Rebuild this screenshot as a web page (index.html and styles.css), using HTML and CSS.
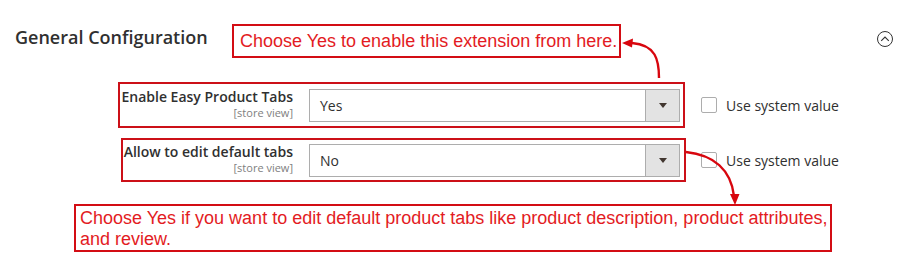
FILE: index.html
```html
<!DOCTYPE html>
<html>
<head>
<meta charset="utf-8">
<link rel="stylesheet" href="styles.css">
</head>
<body>
<div class="page">
  <div class="header">
    <h2 class="title">General Configuration</h2>
    <div class="callout callout-top">Choose Yes to enable this extension from here.</div>
    <svg class="collapse" width="18" height="18" viewBox="0 0 18 18">
      <circle cx="9" cy="9" r="7.5" fill="none" stroke="#333" stroke-width="1"/>
      <polyline points="5.2,10.8 9,7 12.8,10.8" fill="none" stroke="#333" stroke-width="1.1"/>
    </svg>
  </div>

  <div class="rows">
    <div class="row">
      <div class="mark mark-one">
        <div class="label label-one">
          <span class="label-text">Enable Easy Product Tabs</span>
          <span class="scope">[store view]</span>
        </div>
        <div class="select">
          <span class="select-value">Yes</span>
          <span class="select-toggle"><span class="caret"></span></span>
        </div>
      </div>
      <label class="use-system"><span class="checkbox"></span>Use system value</label>
    </div>

    <div class="row row-two">
      <div class="mark mark-two">
        <div class="label label-two">
          <span class="label-text">Allow to edit default tabs</span>
          <span class="scope">[store view]</span>
        </div>
        <div class="select">
          <span class="select-value">No</span>
          <span class="select-toggle"><span class="caret"></span></span>
        </div>
      </div>
      <label class="use-system"><span class="checkbox"></span>Use system value</label>
    </div>
  </div>

  <div class="callout callout-bottom">Choose Yes if you want to edit default product tabs like product description, product attributes,<br>and review.</div>

  <svg class="arrows" width="905" height="275" viewBox="0 0 905 275">
    <path d="M659,78 C659,60 656,45 632,43" fill="none" stroke="#d8060e" stroke-width="2.4"/>
    <polygon points="622,43 633,38.5 632,47.5" fill="#d8060e"/>
    <path d="M686,152 C714,155 731,170 734,196" fill="none" stroke="#d8060e" stroke-width="2.4"/>
    <polygon points="735,205 730,194 739.5,194" fill="#d8060e"/>
  </svg>
</div>
</body>
</html>
```

FILE: styles.css
```css
html, body {
  margin: 0;
  padding: 0;
  background: #ffffff;
}

.page {
  position: relative;
  width: 905px;
  height: 275px;
  overflow: hidden;
  font-family: "Open Sans", "Liberation Sans", sans-serif;
  color: #303030;
}

.header {
  display: flex;
  align-items: flex-start;
  padding: 24px 11px 0 0;
  height: 34px;
}

.title {
  margin: 3px 0 0 0;
  padding-left: 15px;
  width: 232px;
  box-sizing: border-box;
  font-size: 18px;
  line-height: 20px;
  font-weight: 600;
  color: #303030;
  white-space: nowrap;
}

.callout {
  border: 2px solid #d30d14;
  color: #e31b23;
  font-family: "Liberation Sans", Arial, sans-serif;
  font-size: 18px;
  box-sizing: border-box;
  white-space: nowrap;
}

.callout-top {
  width: 389px;
  height: 34px;
  line-height: 30px;
  padding-left: 6px;
}

.collapse {
  margin-left: auto;
  margin-top: 6px;
  display: block;
}

.rows {
  margin-top: 24px;
  display: flex;
  flex-direction: column;
  gap: 10px;
}

.row {
  display: flex;
  align-items: center;
}

.mark {
  display: flex;
  align-items: flex-start;
  gap: 16px;
  border: 2px solid #cc1018;
  box-sizing: border-box;
}

.mark-one {
  margin-left: 118px;
  width: 567px;
  height: 46px;
  padding: 5px 3px 0 0;
}

.mark-two {
  margin-left: 121px;
  width: 565px;
  height: 44px;
  padding: 4px 4px 0 0;
}

.label {
  display: flex;
  flex-direction: column;
  align-items: flex-end;
  text-align: right;
}

.label-one { width: 173px; }
.label-two { width: 170px; }

.label-text {
  font-size: 14px;
  line-height: 16px;
  font-weight: 600;
  color: #303030;
  white-space: nowrap;
}

.scope {
  margin-top: 2px;
  font-size: 11px;
  line-height: 12px;
  color: #808080;
  white-space: nowrap;
}

.select {
  width: 371px;
  height: 33px;
  box-sizing: border-box;
  border: 1px solid #adadad;
  background: #ffffff;
  display: flex;
  align-items: stretch;
}

.select-value {
  flex: 1;
  padding-left: 10px;
  font-size: 14px;
  line-height: 31px;
  color: #303030;
}

.select-toggle {
  width: 33px;
  background: #e3e3e3;
  border-left: 1px solid #adadad;
  display: flex;
  align-items: center;
  justify-content: center;
}

.caret {
  width: 0;
  height: 0;
  border-left: 4.5px solid transparent;
  border-right: 4.5px solid transparent;
  border-top: 5px solid #41362f;
}

.use-system {
  display: flex;
  align-items: center;
  gap: 9px;
  margin-left: 16px;
  font-size: 14px;
  line-height: 17px;
  color: #303030;
  white-space: nowrap;
}

.row-two .use-system {
  margin-left: 15px;
}

.checkbox {
  width: 16px;
  height: 16px;
  box-sizing: border-box;
  border: 1px solid #adadad;
  border-radius: 2px;
  background: #ffffff;
}

.callout-bottom {
  margin: 22px 0 0 74px;
  width: 758px;
  height: 48px;
  line-height: 21px;
  padding: 1.5px 4px 0 4px;
}

.arrows {
  position: absolute;
  left: 0;
  top: 0;
  pointer-events: none;
}
```
